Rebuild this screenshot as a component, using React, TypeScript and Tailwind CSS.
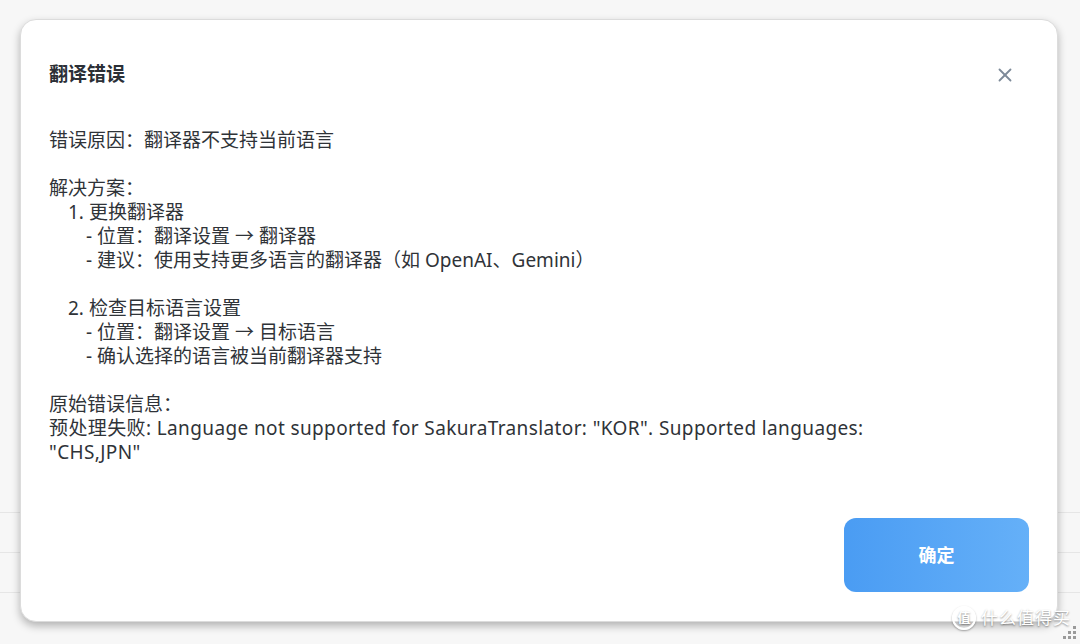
import { X } from 'lucide-react';

const font = { fontFamily: '"Noto Sans", "Noto Sans CJK SC", sans-serif' };

type Line = { text: string; indent?: number; wide?: boolean };

const lines: Line[] = [
  { text: '错误原因：翻译器不支持当前语言' },
  { text: '' },
  { text: '解决方案：' },
  { text: '1. 更换翻译器', indent: 1 },
  { text: '- 位置：翻译设置 → 翻译器', indent: 2 },
  { text: '- 建议：使用支持更多语言的翻译器（如 OpenAI、Gemini）', indent: 2 },
  { text: '' },
  { text: '2. 检查目标语言设置', indent: 1 },
  { text: '- 位置：翻译设置 → 目标语言', indent: 2 },
  { text: '- 确认选择的语言被当前翻译器支持', indent: 2 },
  { text: '' },
  { text: '原始错误信息：' },
  { text: '预处理失败: Language not supported for SakuraTranslator: "KOR". Supported languages:', wide: true },
  { text: '"CHS,JPN"', wide: true },
];

export default function App() {
  return (
    <div className="relative w-[1080px] h-[644px] overflow-hidden bg-[#f7f7f7]" style={font}>
      {/* page behind the dialog */}
      <div className="flex flex-col pt-[512px]">
        <div className="h-[40px] border-t border-[#e6e6e6]" />
        <div className="h-[40px] border-t border-[#e6e6e6]" />
        <div className="h-[40px] border-t border-[#e6e6e6]" />
      </div>

      {/* dialog */}
      <div className="absolute left-[20px] top-[19px] w-[1038px] h-[603px] bg-white rounded-[16px] border border-[#dcdcdc] shadow-[0_4px_8px_rgba(0,0,0,0.28)] flex flex-col px-[28px] pt-[42px] pb-[29px]">
        <div className="flex items-center justify-between h-[24px]">
          <h2 className="text-[19px] leading-[24px] font-bold text-[#2b2f36]">翻译错误</h2>
          <button className="mr-[13px] mt-[2px] text-[#7d8a99]">
            <X size={22} strokeWidth={2} />
          </button>
        </div>

        <div className="mt-[42px] text-[19px] leading-[24px] text-[#2f3338]">
          {lines.map((l, i) => (
            <div
              key={i}
              className={
                'h-[24px] whitespace-pre ' +
                (l.indent === 1 ? 'pl-[19px] ' : l.indent === 2 ? 'pl-[37px] ' : '') +
                (l.wide ? 'tracking-[0.38px]' : '')
              }
            >
              {l.text}
            </div>
          ))}
        </div>

        <div className="mt-auto flex justify-end">
          <button className="w-[185px] h-[74px] rounded-[12px] bg-gradient-to-r from-[#4a9cf3] to-[#65b0f8] text-white text-[18px] font-semibold">
            确定
          </button>
        </div>
      </div>

      {/* watermark */}
      <div className="absolute left-[952px] top-[606px] flex items-center gap-[5px] text-white [text-shadow:0_1px_2px_rgba(0,0,0,0.45)]">
        <span className="w-[24px] h-[24px] rounded-full border-2 border-white flex items-center justify-center text-[13px] font-bold shadow-[0_1px_2px_rgba(0,0,0,0.35)]">
          值
        </span>
        <span className="text-[17px] leading-[24px] tracking-[1px]">什么值得买</span>
      </div>
      <div className="absolute left-[1063px] top-[626px] grid grid-cols-3 gap-[2px]">
        {Array.from({ length: 9 }).map((_, i) => (
          <span key={i} className={'w-[3px] h-[3px] ' + (i === 0 || i === 1 || i === 3 ? 'bg-transparent' : 'bg-[#9a9a9a]')} />
        ))}
      </div>
    </div>
  );
}
